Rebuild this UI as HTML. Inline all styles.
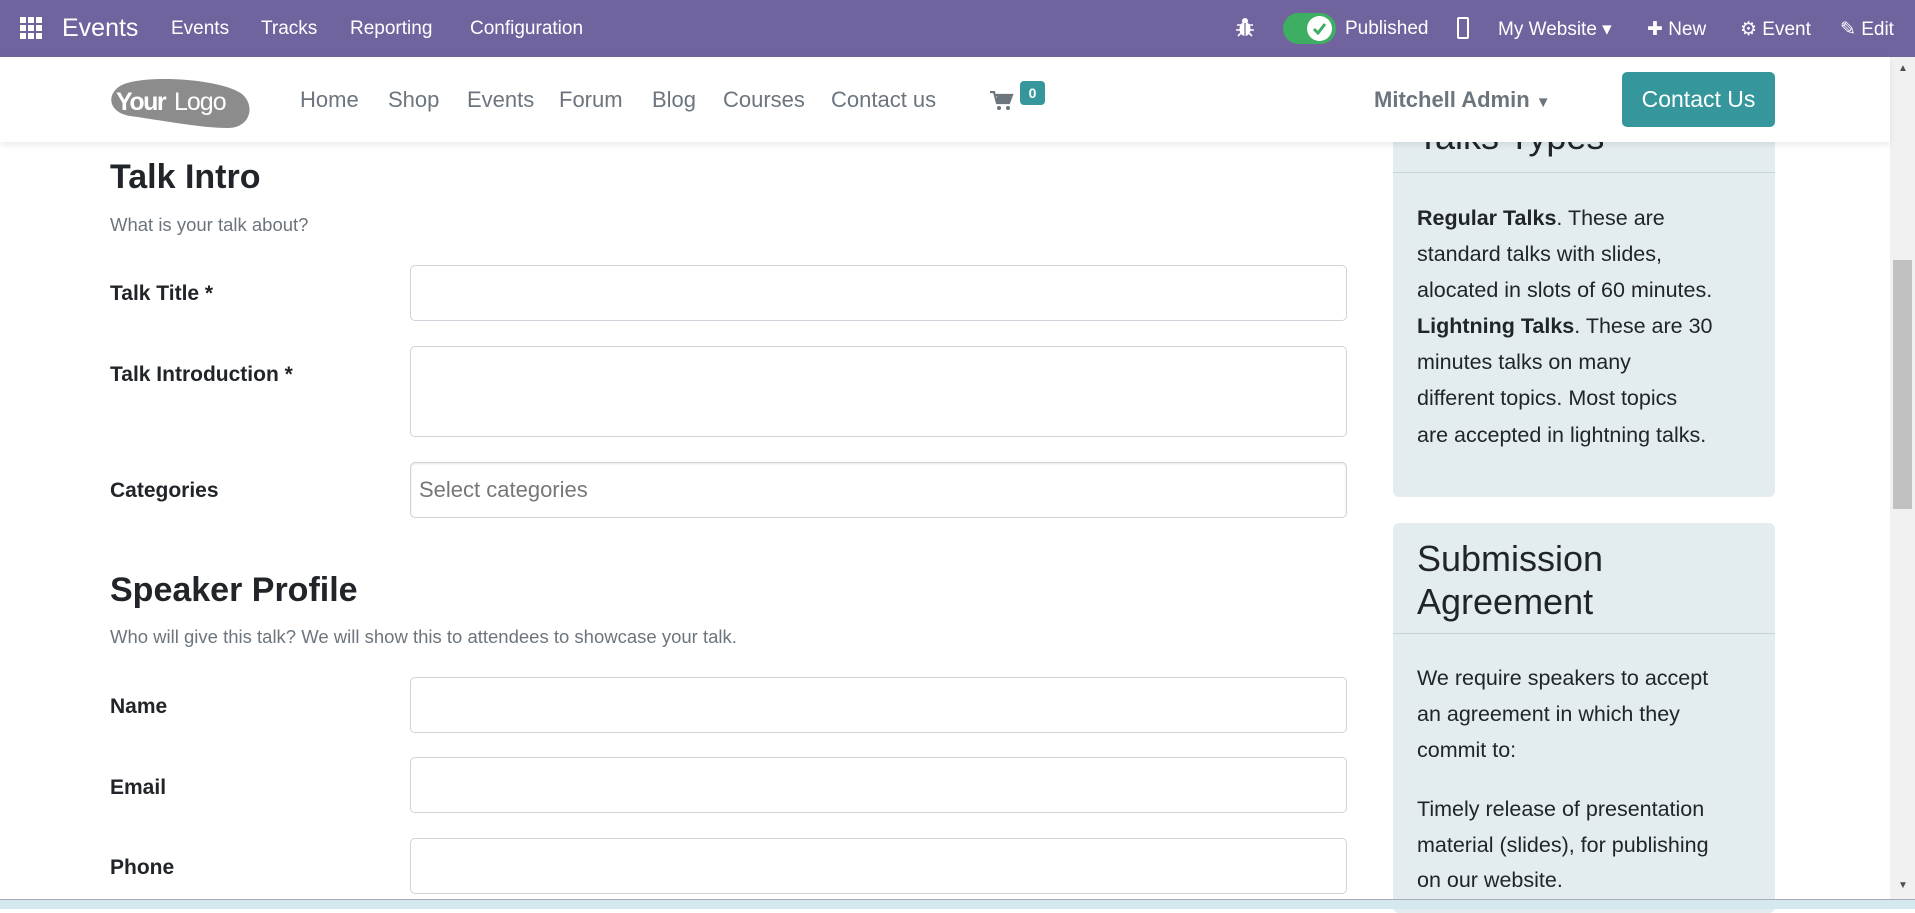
<!DOCTYPE html>
<html><head><meta charset="utf-8"><style>
*{box-sizing:border-box;margin:0;padding:0}
body{width:1915px;height:909px;overflow:hidden;background:#fff;font-family:"Liberation Sans",sans-serif;position:relative;color:#212529}
.abs{position:absolute}
.top{left:0;top:0;width:1915px;height:57px;background:#71639e;color:#fff;font-size:19px}
.top span{position:absolute;top:18px;white-space:nowrap}
.nav{left:0;top:57px;width:1890px;height:85px;background:#fff;box-shadow:0 3px 6px rgba(0,0,0,.08);z-index:5}
.nav .l{position:absolute;top:30px;font-size:22px;color:#6c757d}
.h{font-weight:bold;font-size:34px;color:#212529}
.sub{font-size:18.5px;color:#6c757d}
.lab{font-weight:bold;font-size:21px}
.inp{left:410px;width:937px;border:1px solid #ced4da;border-radius:5px;background:#fff}
.card{left:1393px;width:382px;background:#e3ecee;border-radius:6px;font-size:21.5px;color:#212529}
.card p{position:absolute;left:24px;white-space:nowrap}
</style></head><body>
<div class="abs top">
 <svg class="abs" style="left:20px;top:17px" width="22" height="22" viewBox="0 0 22 22" fill="#fff"><rect x="0" y="0" width="6" height="6"/><rect x="8" y="0" width="6" height="6"/><rect x="16" y="0" width="6" height="6"/><rect x="0" y="8" width="6" height="6"/><rect x="8" y="8" width="6" height="6"/><rect x="16" y="8" width="6" height="6"/><rect x="0" y="16" width="6" height="6"/><rect x="8" y="16" width="6" height="6"/><rect x="16" y="16" width="6" height="6"/></svg>
 <span style="left:62px;top:14px;font-size:25px">Events</span>
 <span style="left:171px">Events</span><span style="left:261px">Tracks</span><span style="left:350px">Reporting</span><span style="left:470px">Configuration</span>
 <svg class="abs" style="left:1235px;top:17px" width="20" height="20" viewBox="0 0 20 20" fill="#fff"><circle cx="10" cy="4" r="3"/><ellipse cx="10" cy="12" rx="5.5" ry="7"/><path d="M2 8h16M1 13h18M3 19l3-3M17 19l-3-3" stroke="#fff" stroke-width="1.6"/><path d="M10 6v13" stroke="#71639e" stroke-width="1.2"/></svg>
 <div class="abs" style="left:1283px;top:13px;width:53px;height:31px;border-radius:16px;background:#3eae62"></div>
 <div class="abs" style="left:1307px;top:16px;width:25px;height:25px;border-radius:50%;background:#fff"></div>
 <svg class="abs" style="left:1312px;top:22px" width="15" height="13"><path d="M2 7l4 4 7-9" stroke="#3eae62" stroke-width="3" fill="none"/></svg>
 <span style="left:1345px">Published</span>
 <div class="abs" style="left:1457px;top:17px;width:12px;height:22px;border:2px solid #fff;border-radius:2px"></div>
 <span style="left:1498px">My Website ▾</span>
 <span style="left:1647px">✚ New</span>
 <span style="left:1740px">⚙ Event</span>
 <span style="left:1840px">✎ Edit</span>
</div>
<div class="abs nav">
 <svg class="abs" style="left:110px;top:19px" width="143" height="53" viewBox="0 0 143 53"><path d="M10 10 C30 -2 110 2 132 18 C146 30 140 52 118 52 C90 52 50 44 20 40 C0 37 -5 20 10 10Z" fill="#8c8c8c"/><text x="6" y="34" font-family="Liberation Sans" font-weight="bold" font-size="25" fill="#fff" letter-spacing="-1.5">Your</text><text x="64" y="34" font-family="Liberation Sans" font-size="25" fill="#fff" letter-spacing="-1">Logo</text></svg>
 <span class="l" style="left:300px">Home</span><span class="l" style="left:388px">Shop</span><span class="l" style="left:467px">Events</span><span class="l" style="left:559px">Forum</span><span class="l" style="left:652px">Blog</span><span class="l" style="left:723px">Courses</span><span class="l" style="left:831px">Contact us</span>
 <svg class="abs" style="left:990px;top:34px" width="24" height="20" viewBox="0 0 24 20" fill="#6c757d"><path d="M0 1h4l3 11h12l3-8H6" stroke="#6c757d" stroke-width="2.2" fill="none"/><rect x="7" y="5" width="13" height="6"/><circle cx="9" cy="17" r="2"/><circle cx="18" cy="17" r="2"/></svg>
 <div class="abs" style="left:1020px;top:24px;width:25px;height:24px;background:#35979c;border-radius:4px;color:#fff;font-size:14px;font-weight:bold;text-align:center;line-height:24px">0</div>
 <span class="l" style="left:1374px;font-weight:bold;color:#6c757d">Mitchell Admin <span style="font-size:15px">▼</span></span>
 <div class="abs" style="left:1622px;top:15px;width:153px;height:55px;background:#35979c;border-radius:5px;color:#fff;font-size:23px;text-align:center;line-height:55px">Contact Us</div>
</div>
<div class="abs h" style="left:110px;top:158px">Talk Intro</div>
<div class="abs sub" style="left:110px;top:214px">What is your talk about?</div>
<div class="abs lab" style="left:110px;top:282px">Talk Title *</div>
<div class="abs inp" style="top:265px;height:56px"></div>
<div class="abs lab" style="left:110px;top:363px">Talk Introduction *</div>
<div class="abs inp" style="top:346px;height:91px"></div>
<div class="abs lab" style="left:110px;top:479px">Categories</div>
<div class="abs inp" style="top:462px;height:56px;box-shadow:inset 0 1px 2px rgba(0,0,0,.1)"><span class="abs" style="left:8px;top:14px;font-size:22px;color:#777">Select categories</span></div>
<div class="abs h" style="left:110px;top:571px">Speaker Profile</div>
<div class="abs sub" style="left:110px;top:626px">Who will give this talk? We will show this to attendees to showcase your talk.</div>
<div class="abs lab" style="left:110px;top:695px">Name</div>
<div class="abs inp" style="top:677px;height:56px"></div>
<div class="abs lab" style="left:110px;top:776px">Email</div>
<div class="abs inp" style="top:757px;height:56px"></div>
<div class="abs lab" style="left:110px;top:856px">Phone</div>
<div class="abs inp" style="top:838px;height:56px"></div>
<div class="abs card" style="top:100px;height:397px">
 <div class="abs" style="left:0;top:72px;width:382px;height:1px;background:#c6d3d5"></div>
 <p style="top:16px;font-size:36px">Talks Types</p>
 <p style="top:106px"><b>Regular Talks</b>. These are</p>
 <p style="top:142px">standard talks with slides,</p>
 <p style="top:178px">alocated in slots of 60 minutes.</p>
 <p style="top:214px"><b>Lightning Talks</b>. These are 30</p>
 <p style="top:250px">minutes talks on many</p>
 <p style="top:286px">different topics. Most topics</p>
 <p style="top:323px">are accepted in lightning talks.</p>
</div>
<div class="abs card" style="top:523px;height:390px">
 <div class="abs" style="left:0;top:110px;width:382px;height:1px;background:#c6d3d5"></div>
 <p style="top:14px;font-size:36px;line-height:43px">Submission<br>Agreement</p>
 <p style="top:143px">We require speakers to accept</p>
 <p style="top:179px">an agreement in which they</p>
 <p style="top:215px">commit to:</p>
 <p style="top:274px">Timely release of presentation</p>
 <p style="top:310px">material (slides), for publishing</p>
 <p style="top:345px">on our website.</p>
</div>
<div class="abs" style="left:1890px;top:57px;width:25px;height:843px;background:#f1f1f1"></div>
<div class="abs" style="left:1893px;top:260px;width:19px;height:249px;background:#c1c1c1"></div>
<div class="abs" style="left:1898px;top:63px;font-size:10px;color:#505050">▲</div>
<div class="abs" style="left:1898px;top:880px;font-size:10px;color:#505050">▼</div>
<div class="abs" style="left:0;top:899px;width:1915px;height:10px;background:#d3e9ef;border-top:1px solid #aab"></div>
</body></html>
